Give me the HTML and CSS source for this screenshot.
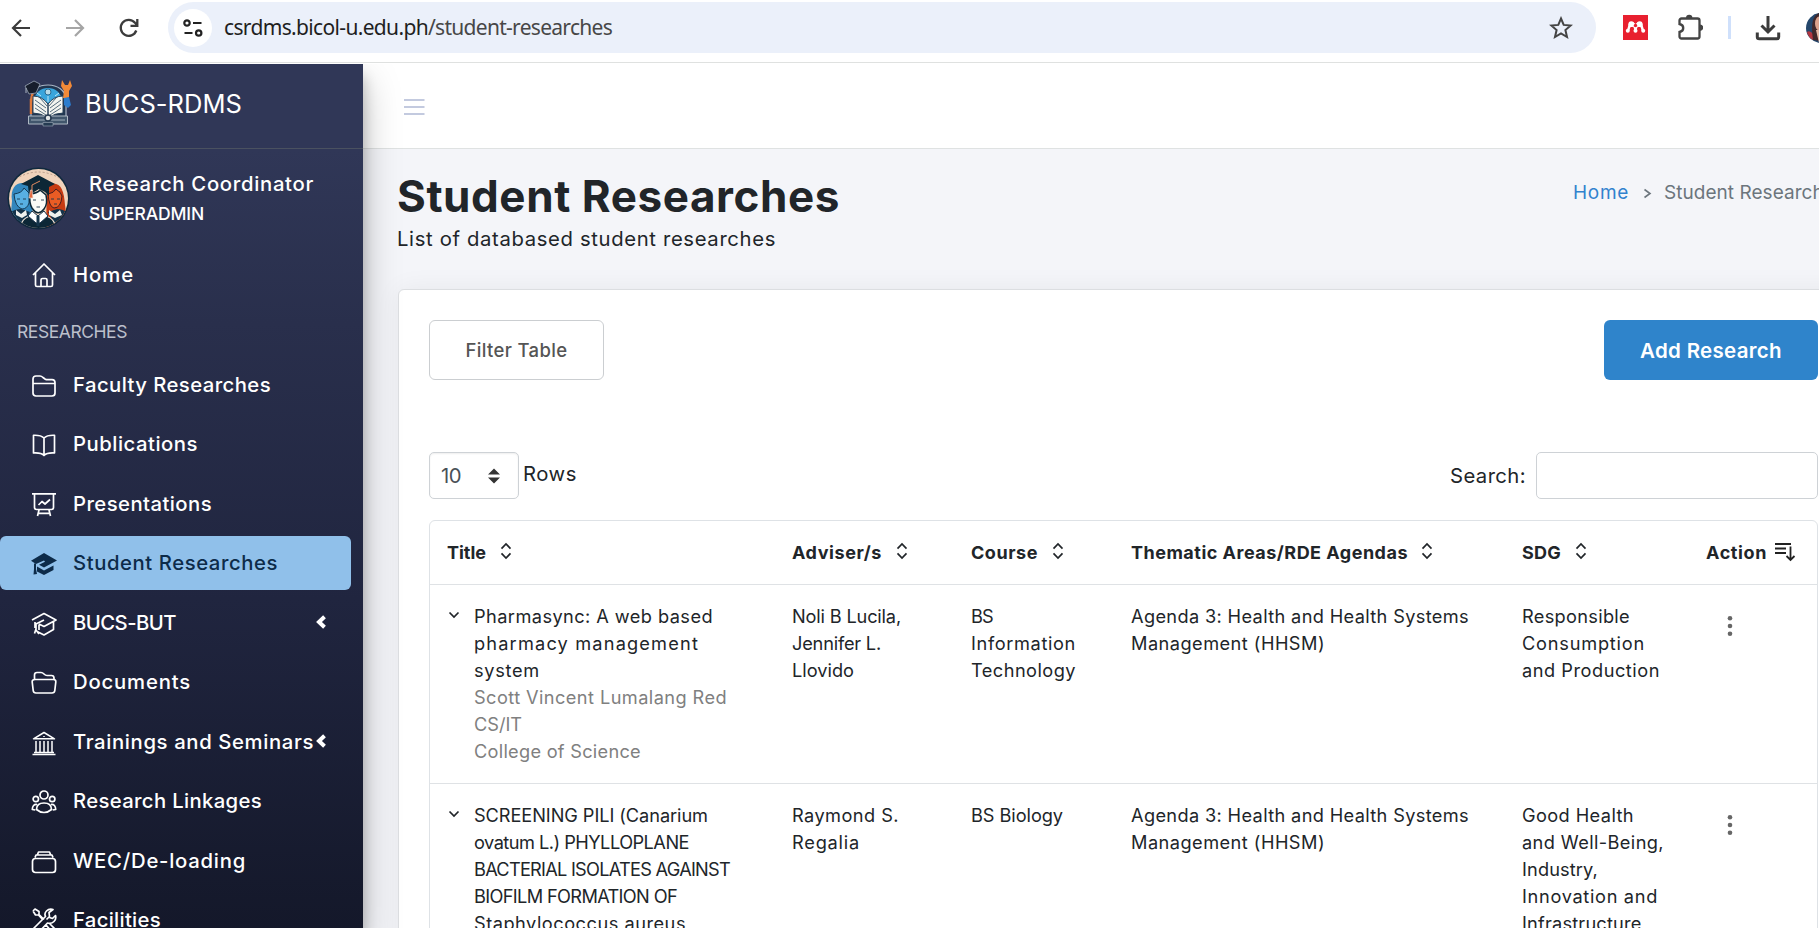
FILE: index.html
```html
<!DOCTYPE html>
<html lang="en">
<head>
<meta charset="utf-8">
<title>BUCS-RDMS | Student Researches</title>
<link rel="stylesheet" href="styles.css">
</head>
<body>
<svg class="defs" width="0" height="0">
  <symbol id="sort" viewBox="0 0 12 18"><path d="M1.5 6.6 6 2l4.500 4.600M1.500 11.400 6 16l4.500-4.600" fill="none" stroke="currentColor" stroke-width="1.700"/></symbol>
  <symbol id="caret" viewBox="0 0 12 16"><path d="M9.500 2.800 4 8l5.500 5.200" fill="none" stroke="currentColor" stroke-width="4"/></symbol>
  <symbol id="down" viewBox="0 0 12 8"><path d="M1.500 1.500 6 6l4.500-4.500" fill="none" stroke="currentColor" stroke-width="1.700"/></symbol>
  <symbol id="dots" viewBox="0 0 6 22"><g fill="#666"><circle cx="3" cy="3.300" r="2.300"/><circle cx="3" cy="11" r="2.300"/><circle cx="3" cy="18.700" r="2.300"/></g></symbol>
</svg>
<header class="browser">
  <div class="nav-buttons">
    <svg width="20" height="20" viewBox="0 0 20 20" fill="none" stroke="#3c3c3c" stroke-width="2.200"><path d="M19 10H2.500M10 2 2 10l8 8"/></svg>
    <svg width="20" height="20" viewBox="0 0 20 20" fill="none" stroke="#a5a5a5" stroke-width="2.200"><path d="M1 10h16.500M10 2l8 8-8 8"/></svg>
    <svg width="20" height="20" viewBox="0 0 20 20" fill="none" stroke="#3c3c3c" stroke-width="2.300"><path d="M17.300 12.500A8 8 0 1 1 16 4.800L18 7M18.300 1v6.800h-6.800"/></svg>
  </div>
  <div class="address">
    <div class="site-info"><svg width="20" height="18" viewBox="0 0 20 18" fill="none" stroke="#222" stroke-width="2.200"><circle cx="4" cy="4" r="2.700"/><path d="M10 4h8.500M1.500 14h8"/><circle cx="15.700" cy="14" r="2.700"/></svg></div>
    <div class="url"><span data-w="203">csrdms.bicol-u.edu.ph</span><span class="path" data-w="183">/student-researches</span></div>
    <svg class="star" width="24" height="24" viewBox="0 0 24 24" fill="none" stroke="#444" stroke-width="2"><path d="m12 2.500 2.700 6.400 7 .6-5.300 4.600 1.600 6.900-6-3.700-6 3.700 1.600-6.900-5.300-4.600 7-.6z"/></svg>
  </div>
  <div class="extensions">
    <svg width="25" height="25" viewBox="0 0 25 25"><path fill="#e8202f" d="M0 0h25v25H0z"/><g fill="#fff"><circle cx="8.300" cy="9.200" r="2.900"/><circle cx="16.700" cy="9.200" r="2.900"/><circle cx="4.800" cy="15.700" r="2"/><circle cx="12.500" cy="15.700" r="2"/><circle cx="20.200" cy="15.700" r="2"/><path d="M4 15 6 8l4-1 2.500 2L15 7l4 1 2 7-2 1-2-5-2 0-1.500 4h-2L10 11H8l-2 5z"/></g><circle cx="12.500" cy="10.500" r="1.700" fill="#e8202f"/></svg>
    <svg class="puzzle" width="25" height="26" viewBox="0 0 25 26"><path d="M3.500 4.500h16a2 2 0 0 1 2 2v16a2 2 0 0 1-2 2h-16a2 2 0 0 1-2-2V18c5-1 5-7 0-8V6.500a2 2 0 0 1 2-2z" fill="none" stroke="#444" stroke-width="2.300"/><path d="M8 4a3.200 3.200 0 0 1 6.400 0zM22 10.500a3.200 3.200 0 0 1 0 6.400z" fill="#444"/></svg>
    <span class="divider"></span>
    <svg class="download" width="26" height="26" viewBox="0 0 26 26" fill="none" stroke="#3c3c3c" stroke-width="3"><path d="M13 1v15M6.500 10.500 13 17l6.500-6.500"/><path d="M2.300 17.500V22q0 1.800 2 1.800h17.400q2 0 2-1.800v-4.500"/></svg>
    <svg class="profile" width="30" height="30" viewBox="0 0 30 30"><circle cx="15" cy="15" r="15" fill="#24476c"/><path d="M1 19q3-2 6 2v6Q2 24 1 19z" fill="#b33640"/><path d="M7 27C5 12 6 3 13 0h8v29z" fill="#42282a"/><ellipse cx="13.500" cy="10.500" rx="4.500" ry="7" fill="#dca38e"/><path d="M10 17h9v13h-6z" fill="#e6b8a5"/></svg>
  </div>
</header>
<div class="app">
  <aside class="sidebar">
    <div class="brand">
      <svg width="48" height="48" viewBox="0 0 48 48">
        <path d="M7 41V21C7 10 15 6 24 6s18 5 18 15v20" fill="#213650" stroke="#a9b4c4" stroke-width="1.200"/>
        <path d="M7 20v15M8.500 14 7 24" stroke="#e0793a" stroke-width="2.500"/>
        <path d="M10 22c1-9 7-13 14-13s13 4 14 13l-14 8z" fill="#39a5dc"/>
        <circle cx="24" cy="13" r="3" fill="#b8dbe8" stroke="#2b6a90"/>
        <path d="M13 14l4 3M35 14l-4 3M24 17v6" stroke="#bfe6f7"/>
        <path d="M9 17q9 0 15 8v14q-7-5-15-5zM39 17q-9 0-15 8v14q7-5 15-5z" fill="#f3f4ef" stroke="#263f56"/>
        <path d="m11 21 11 8M11 25l11 8M11 29l11 7M37 21l-11 8M37 25l-11 8M37 29l-11 7M16 19l7 8M32 19l-7 8" stroke="#2d4960" stroke-width=".8"/>
        <path d="M4.500 37h39v8h-39z" fill="#41566c" stroke="#afb9c4"/><path d="M7 41h34" stroke="#9dabb8"/>
        <circle cx="24" cy="39" r="3" fill="#e2e6e6" stroke="#26394f" stroke-width="1.500"/><path d="M19 43.500h10v3.500H19z" fill="#253b52" stroke="#9fabb8" stroke-width=".6"/>
        <path d="m1 7 9-5 6 3-4 9-7 1z" fill="#171e2c" stroke="#9ba6b5" stroke-width=".8"/><path d="m2 9v5" stroke="#abb4c0"/>
        <path d="m39 19 1-7-3-5 1-6 3 5h3l2-5 2 6-3 5v8z" fill="#f28a38"/><path d="m40 19 5-1 2 8-3 3-4-3z" fill="#2b7ccd"/>
      </svg>
      <span data-w="156">BUCS-RDMS</span>
    </div>
    <div class="user">
      <svg width="63" height="63" viewBox="0 0 63 63">
        <clipPath id="disc"><circle cx="31.500" cy="31.500" r="29.500"/></clipPath>
        <circle cx="31.500" cy="31.500" r="31" fill="#10293d"/><circle cx="31.500" cy="31.500" r="29.500" fill="#f0d3bb"/>
        <g clip-path="url(#disc)">
          <path d="M9 12q22-14 45 0" fill="none" stroke="#b79a87" stroke-dasharray="2 2"/>
          <path d="M5 34C3 20 10 15 17 16q6 1 7 9l2 24-6 6H3z" fill="#3286bd"/><path d="M7 27q8-1 10-6l5 5v10q-2 6-7 6-7-2-8-15z" fill="#58afe2" stroke="#163a54"/>
          <path d="M40 18c13-5 17 4 18 20l3 22H39z" fill="#c73b12"/><path d="M41 27q6-1 8-5 5 3 6 7-1 12-8 12-5-1-6-14z" fill="#ea5c24" stroke="#471f20"/>
          <path d="M2 46q6-4 12-4l9 3-6 11H2zM61 46q-5-4-11-4l-9 3 6 11h14z" fill="#14344b"/>
          <path d="m9 43 5 4 5-4 1 5-5 3-6-3zM42 43l6 4 5-4 2 5-7 3-6-3z" fill="#eef1ee"/>
          <path d="M13 64c0-11 7-16 18-16s18 5 18 16z" fill="#0c2736" stroke="#f0e4d8" stroke-width="1.200"/>
          <path d="m25 44 6 5 6-5 4 5-8 7h-4l-8-7z" fill="#fff" stroke="#17324a"/><path d="m29.500 49 1.500-1 1.500 1v10h-3z" fill="#14354b"/>
          <path d="M23 27q8-1 10-4l6 5q2 9-2 14-6 8-12-1-3-5-2-14z" fill="#fafaf6" stroke="#0c2736" stroke-width="1.500"/>
          <path d="m14 17 17-9 17 9-6 3v9l-4-4-6-3-5 3-5 3-1-9z" fill="#0c2736"/><path d="m33 14-8 4v7" fill="none" stroke="#df8b61"/><path d="m23.500 23-1.500 8h4l-1-8z" fill="#e2683f" stroke="#f6e6dc" stroke-width=".6"/>
          <path d="M26 33h3M34 33h3M29.500 40h3.500M10 32h3M16 32h3M44 32h3M50 32h3M13 37h3M47 37h3" stroke="#1b354a" stroke-width=".9"/>
        </g>
      </svg>
      <div class="who"><span class="name" data-w="224">Research Coordinator</span><span class="role" data-w="114">SUPERADMIN</span></div>
    </div>
    <nav class="menu">
      <a class="item"><svg class="home" viewBox="0 0 26 26"><path d="M2 13 13 2l11 11M4.500 11v12a1.500 1.500 0 0 0 1.500 1.500h14a1.500 1.500 0 0 0 1.500-1.500V11M10 24.500V18q0-1.500 1.500-1.500h3Q16 16.500 16 18v6.500"/></svg><span data-w="60">Home</span></a>
      <div class="heading"><span data-w="109">RESEARCHES</span></div>
      <a class="item"><svg viewBox="0 0 26 26"><path d="M2 20V6q0-3 3-3h4q1.500 0 3 1.500l2 1.500q1 .7 3 .7h4q3 0 3 3V20q0 3-3 3H5q-3 0-3-3zM2 10.500h22"/></svg><span data-w="197">Faculty Researches</span></a>
      <a class="item"><svg viewBox="0 0 26 26"><path d="M13 6v18M13 6q-3-3-10.500-2.700V21Q10 20.500 13 23.500 16 20.500 23.500 21V3.300Q16 3 13 6z"/></svg><span data-w="124">Publications</span></a>
      <a class="item"><svg viewBox="0 0 26 26"><path d="M1 1.800h24M3.500 2v13.500q0 2 2 2h15q2 0 2-2V2M8 18l-1.500 6M18 18l1.500 6M7.500 21.300h11M7.500 13l3.500-3.500 3 2.500L19 7.500"/></svg><span data-w="138">Presentations</span></a>
      <a class="item active"><svg viewBox="0 0 26 26"><g stroke="none" fill="#0d2b49"><path d="m13 2 13 7.500-13 7L8 13.800l6-3-1-1.300-8 3.500-5-3.300z"/><path d="m6 15.500 7 4 9.500-5v4.500L13 24l-7-3.500zM3 12.500h2V18l1 5-3.500.5L3 18z"/></g></svg><span data-w="204">Student Researches</span></a>
      <a class="item"><svg viewBox="0 0 26 26"><path d="M1 9 13 2.500 25 9l-12 6.500L8 13M13 9l-8 4v5l-1.500 4.500M5 19l3 4M4 11v6M22.500 11v7.500L13 24l-6-3M8 13.500V19"/></svg><span data-w="102">BUCS-BUT</span><svg class="caret"><use href="#caret"/></svg></a>
      <a class="item"><svg viewBox="0 0 26 26"><path d="M3.500 9V5q0-2.500 2.500-2.500h4q1.500 0 3 1.500t3 1.500h4.500Q23 5.500 23 8v1.500M4 9.500h18.500q2.500 0 2.300 2.500l-1 8.500q-.3 2.500-2.800 2.500H5q-2.500 0-2.800-2.500l-1-8.500Q1 9.500 4 9.500z"/></svg><span data-w="117">Documents</span></a>
      <a class="item"><svg viewBox="0 0 26 26"><path d="M2.500 8.800 13 2.500l10.500 6.300zM5 11v12M9 11v12M13 11v12M17 11v12M21 11v12M3 22.500h20M1.500 24.500h23M13 6v1" stroke-width="1.500"/></svg><span data-w="240">Trainings and Seminars</span><svg class="caret"><use href="#caret"/></svg></a>
      <a class="item"><svg viewBox="0 0 26 26"><circle cx="13" cy="6" r="4"/><circle cx="4.800" cy="10" r="2.700"/><circle cx="21.200" cy="10" r="2.700"/><path d="M5.500 20.500q0-6.500 7.500-6.500t7.500 6.500Q17 23.500 13 23.500t-7.500-3zM6 15.500Q1.500 15 1.300 20.500l3 .5M20 15.500q4.500-.5 4.700 5l-3 .5"/></svg><span data-w="188">Research Linkages</span></a>
      <a class="item"><svg viewBox="0 0 26 26"><path d="M4.500 9.500h17q3 0 3 3v8q0 3-3 3h-17q-3 0-3-3v-8q0-3 3-3zM4 8.500 5 6h16l1 2.500M6.500 5.500 7.500 3h11l1 2.500"/></svg><span data-w="172">WEC/De-loading</span></a>
      <a class="item"><svg viewBox="0 0 26 26"><path d="m2 3 2-2 4 2.500v3l5 5M2 3l2.500 4h3l4.500 5M15.500 11.500l3-3-.5-4 4-3q-4-1-6.500 1.500t-1 5.500L3 20q-2 2.500 0 4.500t4.500 0l9-9.500q4 1 6.500-1.500t1.500-6l-3 3-3-1M15 17l6.500 7.500 3-3L18 15"/></svg><span data-w="87">Facilities</span></a>
    </nav>
  </aside>
  <main class="main">
    <div class="topbar"><svg width="21" height="18" viewBox="0 0 21 18" stroke="#c3cadf" stroke-width="2"><path d="M0 2h20.500M0 9h20.500M0 16h20.500"/></svg></div>
    <div class="page-head">
      <div class="titles"><h1><span data-w="442">Student Researches</span></h1><p><span data-w="378">List of databased student researches</span></p></div>
      <div class="crumbs"><a data-w="55">Home</a><svg width="9" height="12" viewBox="0 0 9 12" fill="none" stroke="#6c757d" stroke-width="1.600"><path d="m1.500 1.500 5.500 4-5.500 4"/></svg><span data-w="180">Student Researches</span></div>
    </div>
    <section class="card">
      <div class="actions"><button class="btn filter"><span data-w="101">Filter Table</span></button><button class="btn add"><span data-w="141">Add Research</span></button></div>
      <div class="controls">
        <div class="length"><div class="select"><span data-w="19">10</span><svg width="12" height="16" viewBox="0 0 12 16" fill="#333"><path d="M0 6.500 6 .5l6 6zM0 9.500l6 6 6-6z"/></svg></div><span data-w="53">Rows</span></div>
        <label class="search"><span data-w="75">Search:</span><input type="text"></label>
      </div>
      <div class="table">
        <div class="row head">
          <div><span data-w="38">Title</span><svg class="sort"><use href="#sort"/></svg></div>
          <div><span data-w="89">Adviser/s</span><svg class="sort"><use href="#sort"/></svg></div>
          <div><span data-w="66">Course</span><svg class="sort"><use href="#sort"/></svg></div>
          <div><span data-w="276">Thematic Areas/RDE Agendas</span><svg class="sort"><use href="#sort"/></svg></div>
          <div><span data-w="38">SDG</span><svg class="sort"><use href="#sort"/></svg></div>
          <div class="action"><span data-w="60">Action</span><svg class="desc" width="21" height="20" viewBox="0 0 21 20" fill="none" stroke="#222" stroke-width="1.800"><path d="M0 2h16M0 6.500h11M0 11h11M15.500 4.500V18M11.500 14l4 4 4-4"/></svg></div>
        </div>
        <div class="row">
          <div class="title"><svg class="down"><use href="#down"/></svg><div><span data-w="238">Pharmasync: A web based</span><span data-w="224">pharmacy management</span><span data-w="65">system</span><span class="muted" data-w="252">Scott Vincent Lumalang Red</span><span class="muted" data-w="47">CS/IT</span><span class="muted" data-w="166">College of Science</span></div></div>
          <div><span data-w="108">Noli B Lucila,</span><span data-w="88">Jennifer L.</span><span data-w="61">Llovido</span></div>
          <div><span data-w="21">BS</span><span data-w="104">Information</span><span data-w="104">Technology</span></div>
          <div><span data-w="337">Agenda 3: Health and Health Systems</span><span data-w="193">Management (HHSM)</span></div>
          <div><span data-w="107">Responsible</span><span data-w="122">Consumption</span><span data-w="137">and Production</span></div>
          <div class="more"><svg class="dots"><use href="#dots"/></svg></div>
        </div>
        <div class="row">
          <div class="title"><svg class="down"><use href="#down"/></svg><div><span data-w="233">SCREENING PILI (Canarium</span><span data-w="214">ovatum L.) PHYLLOPLANE</span><span data-w="255">BACTERIAL ISOLATES AGAINST</span><span data-w="202">BIOFILM FORMATION OF</span><span data-w="211">Staphylococcus aureus</span></div></div>
          <div><span data-w="106">Raymond S.</span><span data-w="67">Regalia</span></div>
          <div><span data-w="91">BS Biology</span></div>
          <div><span data-w="337">Agenda 3: Health and Health Systems</span><span data-w="193">Management (HHSM)</span></div>
          <div><span data-w="111">Good Health</span><span data-w="141">and Well-Being,</span><span data-w="75">Industry,</span><span data-w="135">Innovation and</span><span data-w="124">Infrastructure,</span></div>
          <div class="more"><svg class="dots"><use href="#dots"/></svg></div>
        </div>
      </div>
    </section>
  </main>
</div>
<script src="tracking.js"></script>
</body>
</html>
```

FILE: tracking.js
```js
// Sets the tracking of each label so that it fills its data-w width, in pixels.
document.querySelectorAll('[data-w]').forEach(function (el) {
  var range = document.createRange();
  range.selectNodeContents(el);
  var gap = Number(el.dataset.w) + 1 - range.getBoundingClientRect().width;
  el.style.letterSpacing = (gap / el.textContent.length).toFixed(3) + 'px';
});
```

FILE: styles.css
```css
* { box-sizing: border-box; }
html, body { margin: 0; height: 928px; overflow: hidden; }
body { font-family: Inter, "Open Sans", sans-serif; color: #212529; background: #f4f5f9; white-space: nowrap; }
.defs { position: absolute; }
svg { flex: none; display: block; }
h1, p { margin: 0; }

.browser { position: relative; z-index: 3; height: 64px; display: flex; align-items: flex-start; background: #fff; border-bottom: 1px solid #fff; box-shadow: inset 0 -1px 0 #dfe1e0; overflow: hidden; }
.nav-buttons { flex: none; width: 168px; padding: 18px 0 0 11px; display: flex; gap: 34px; }
.address { flex: none; width: 1428px; height: 51px; margin-top: 2px; padding: 0 23px 0 6px; display: flex; align-items: center; border-radius: 26px; background: #ebf0fa; }
.site-info { width: 38px; height: 38px; border-radius: 50%; background: #fff; display: flex; align-items: center; justify-content: center; }
.url { margin-left: 12px; margin-top: -2px; font: 21px/30px "Noto Sans", sans-serif; color: #1f1f1f; display: flex; }
.url .path { color: #474747; }
.star { margin-left: auto; }
.extensions { flex: none; display: flex; padding: 15px 0 0 27px; }
.puzzle { margin: -1px 0 0 30px; }
.divider { width: 3px; height: 23px; margin: 1px 0 0 25px; background: #cfe0fb; }
.download { margin-left: 24px; }
.profile { margin: -2px 0 0 25px; }

.app { display: flex; height: 864px; }
.sidebar { position: relative; z-index: 2; flex: none; width: 363px; height: 864px; color: #fff; background: linear-gradient(#303757 0, #303757 10%, #292f4c 30%, #20253f 62%, #14182a 100%); box-shadow: 0 17px 35px rgba(0,0,0,.25), 0 12px 13px rgba(0,0,0,.22); }
.brand { height: 85px; padding: 15px 0 0 24px; display: flex; gap: 13px; border-bottom: 1px solid #4a5160; }
.brand span { font-size: 25.500px; line-height: 49px; }
.user { height: 98px; padding: 18px 0 0 7px; display: flex; gap: 19px; }
.who { display: flex; flex-direction: column; }
.name { font-size: 20.300px; font-weight: 500; line-height: 30px; margin-top: 2px; }
.role { font-size: 17.500px; font-weight: 500; line-height: 28px; margin-top: 1px; }
.menu { height: 681px; overflow: hidden; display: flex; flex-direction: column; gap: 5.500px; }
.item { flex: none; width: 351px; height: 54px; padding-left: 31px; display: flex; align-items: center; font-size: 20.300px; font-weight: 500; border-radius: 6px; }
.item > svg:first-child { width: 26px; height: 26px; margin-right: 16px; margin-top: 3px; fill: none; stroke: #fff; stroke-width: 1.700; stroke-linejoin: round; }
.item > .home:first-child { margin-top: 1px; }
.item .caret { width: 12px; height: 16px; margin-left: auto; margin-right: 24px; }
.item.active { background: #90c0ea; color: #0d2b49; }
.heading { height: 45px; padding: 4px 0 0 17px; line-height: 42px; font-size: 17.500px; color: #bcc0cc; flex: none; }

.main { flex: 1; overflow: hidden; min-width: 0; }
.topbar { height: 85px; padding: 34px 0 0 41px; background: #fff; border-bottom: 1px solid #dfe2e2; }
.page-head { height: 140px; padding: 22px 0 0 34px; display: flex; }
.titles { flex: none; width: 1176px; }
h1 { font-size: 44px; line-height: 50px; font-weight: 750; }
p { font-size: 20.300px; line-height: 30px; margin-top: 3px; }
.crumbs { display: flex; font-size: 19px; line-height: 43px; color: #6c757d; }
.crumbs a { color: #3182ce; width: 56px; }
.crumbs svg { margin: 17px 12px 0 14px; }
.card { width: 1451px; height: 700px; margin-left: 35px; padding: 30px; background: #fff; border: 1px solid #dcdee1; border-radius: 6px; box-shadow: 0 0 26px rgba(0,0,0,.06); }
.actions { display: flex; justify-content: space-between; }
.btn { height: 60px; border-radius: 6px; font-family: Inter, sans-serif; padding: 0; text-align: center; }
.filter { width: 175px; background: #fff; border: 1px solid #cbced1; font-size: 18.500px; font-weight: 500; color: #555; }
.add { width: 214px; background: #2f84cb; border: 0; font-size: 20.500px; font-weight: 600; color: #fff; }
.controls { display: flex; justify-content: space-between; margin-top: 72px; font-size: 20.300px; }
.length { display: flex; gap: 4px; line-height: 44px; }
.select { width: 90px; height: 47px; padding: 0 18px 0 11px; display: flex; justify-content: space-between; align-items: center; border: 1px solid #ced2d6; border-radius: 5px; color: #495057; box-shadow: inset 0 1px 2px rgba(0,0,0,.07); }
.search { display: flex; gap: 10px; line-height: 48px; }
.search input { width: 282px; height: 47px; border: 1px solid #ced2d6; border-radius: 5px; background: #fff; }
.table { width: 1389px; margin-top: 20px; border: 1px solid #dee2e6; border-radius: 6px 6px 0 0; }
.row { display: grid; grid-template-columns: 345px 179px 160px 391px 184px 1fr; padding: 18px 0 0 17px; height: 199px; border-bottom: 1px solid #dfe2e5; font-size: 18.200px; line-height: 27px; }
.row:last-child { height: 300px; border: 0; }
.row span { display: block; width: max-content; }
.row.head { height: 64px; font-weight: 700; font-size: 18px; }
.row.head > div { display: flex; gap: 13.500px; }
.row.head > .action { gap: 8px; }
.sort { width: 12px; height: 18px; margin-top: 3px; }
.desc { margin-top: 3px; }
.title { display: flex; gap: 14px; }
.down { width: 12px; height: 8px; margin: 8px 0 0 1px; }
.dots { width: 6px; height: 22px; margin: 12px 0 0 21px; }
.muted { color: #808080; }
```
